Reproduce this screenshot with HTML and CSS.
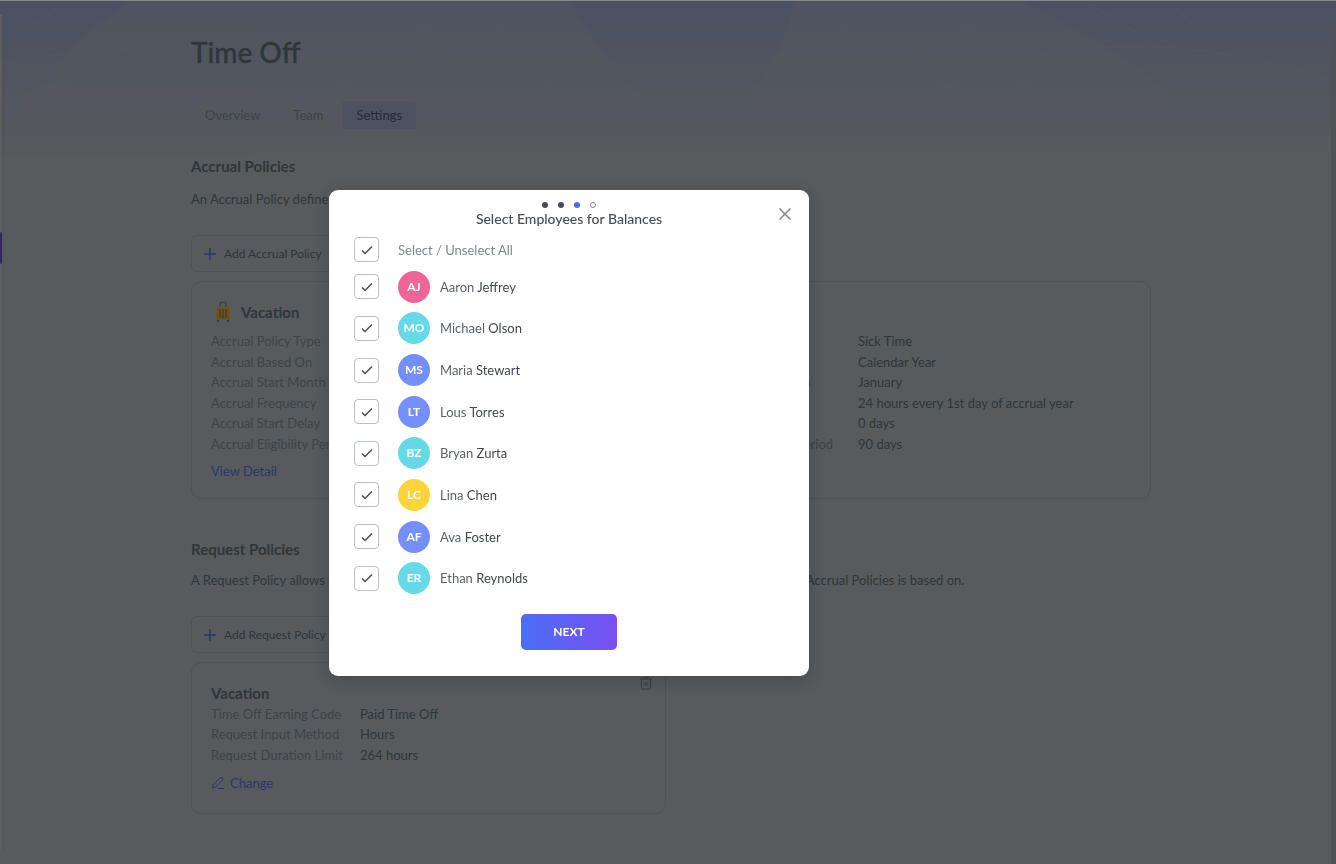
FILE: index.html
```html
<!DOCTYPE html>
<html lang="en">
<head>
  <meta charset="UTF-8" />
  <meta name="viewport" content="width=device-width, initial-scale=1" />
  <title>Time Off</title>
  <link rel="stylesheet" href="styles.css">
</head>
<body>
  <svg class="backdrop" viewBox="0 0 1336 156" preserveAspectRatio="none" aria-hidden="true">
    <g class="shapes">
      <path d="M520 0H570Q600 55 650 105L690 150H340L380 100Q450 40 520 0Z" />
      <path d="M796 0H885Q905 45 950 98L983 134L1040 156H680L743 105Q780 60 796 0Z" />
      <path d="M1020 0Q1110 40 1170 95L1240 156H983Q930 90 885 0Z" />
      <path d="M130 0H520Q450 40 380 100L340 156H0Q40 60 130 0Z" />
    </g>
    <g class="lines">
      <path d="M0 42Q35 28 60 3M0 102Q100 80 182 3M0 64Q80 45 170 52M0 122Q110 98 200 110" />
      <path d="M462 3Q380 50 320 105M485 3Q530 75 590 120M853 5Q840 30 830 55" />
      <path d="M950 3Q990 65 1070 120M890 116C980 60 1120 10 1330 80M1088 3Q1160 40 1212 98M1172 3L1212 44" />
    </g>
  </svg>
  <aside class="sidebar"><span class="marker"></span></aside>

  <main class="page">
    <h1>Time Off</h1>
    <nav class="tabs">
      <a href="#overview">Overview</a>
      <a href="#team">Team</a>
      <a href="#settings" class="active">Settings</a>
    </nav>

    <section>
      <h2>Accrual Policies</h2>
      <p>An Accrual Policy defines how employees earn their time off.</p>
      <button class="add" type="button">
        <svg width="14" height="14" viewBox="0 0 14 14"><path d="M7 1v12M1 7h12" /></svg>
        Add Accrual Policy
      </button>
      <div class="cards">
        <article class="card accrual">
          <h3>
            <svg width="24" height="24" viewBox="0 0 24 24">
              <path d="M9 7V3.500Q9 2.500 10 2.500H14Q15 2.500 15 3.500V7" fill="none" stroke="#3d4346" stroke-width="1.500" />
              <rect x="5" y="7" width="14" height="13" rx="2" fill="#6d5320" />
              <path d="M9 9v9M12 9v9M15 9v9" stroke="#46391f" stroke-width="1.300" />
              <path d="M7 20v2M17 20v2" stroke="#35393b" stroke-width="2" />
            </svg>
            Vacation
          </h3>
          <dl>
            <dt>Accrual Policy Type</dt><dd>Vacation</dd>
            <dt>Accrual Based On</dt><dd>Calendar Year</dd>
            <dt>Accrual Start Month</dt><dd>January</dd>
            <dt>Accrual Frequency</dt><dd>Every pay period</dd>
            <dt>Accrual Start Delay</dt><dd>0 days</dd>
            <dt>Accrual Eligibility Period</dt><dd>90 days</dd>
          </dl>
          <a href="#detail">View Detail</a>
        </article>
        <article class="card accrual">
          <h3>Sick Time</h3>
          <dl>
            <dt>Accrual Policy Type</dt><dd>Sick Time</dd>
            <dt>Accrual Based On</dt><dd>Calendar Year</dd>
            <dt>Accrual Start Month</dt><dd>January</dd>
            <dt>Accrual Frequency</dt><dd>24 hours every 1st day of accrual year</dd>
            <dt>Accrual Start Delay</dt><dd>0 days</dd>
            <dt>Accrual Eligibility Period</dt><dd>90 days</dd>
          </dl>
          <a href="#detail">View Detail</a>
        </article>
      </div>
    </section>

    <section>
      <h2>Request Policies</h2>
      <p>A Request Policy allows employees to request their time off, and it also defines which of the already existing Accrual Policies is based on.</p>
      <button class="add" type="button">
        <svg width="14" height="14" viewBox="0 0 14 14"><path d="M7 1v12M1 7h12" /></svg>
        Add Request Policy
      </button>
      <div class="cards">
        <article class="card request">
          <button class="trash" type="button" aria-label="Delete">
            <svg width="12" height="14" viewBox="0 0 12 14"><path d="M0 3h12M4 3V1h4v2M1.500 3v10h9V3M5 6v4M7 6v4" /></svg>
          </button>
          <h3>Vacation</h3>
          <dl>
            <dt>Time Off Earning Code</dt><dd>Paid Time Off</dd>
            <dt>Request Input Method</dt><dd>Hours</dd>
            <dt>Request Duration Limit</dt><dd>264 hours</dd>
          </dl>
          <a href="#change">
            <svg width="14" height="14" viewBox="0 0 14 14"><path d="M2 9L9.500 1.500Q10.500 1 11.500 2Q12.500 3 11.500 4L4.500 11L1.500 12ZM7 12.500h6" /></svg>
            Change
          </a>
        </article>
      </div>
    </section>
  </main>
  <div class="edge"></div>

  <div class="overlay">
    <form class="modal" role="dialog" aria-labelledby="modalTitle">
      <button class="close" type="button" aria-label="Close">
        <svg width="14" height="14" viewBox="0 0 14 14"><path d="M1.500 1.500L12.500 12.500M12.500 1.500L1.500 12.500" /></svg>
      </button>
      <div class="steps"><i></i><i></i><i class="current"></i><i class="todo"></i></div>
      <h4 id="modalTitle">Select Employees for Balances</h4>
      <label class="all"><input type="checkbox" checked /><span>Select / Unselect All</span></label>
      <div class="people">
        <label><input type="checkbox" checked /><b class="avatar pink">AJ</b><span>Aaron <em>Jeffrey</em></span></label>
        <label><input type="checkbox" checked /><b class="avatar teal">MO</b><span>Michael <em>Olson</em></span></label>
        <label><input type="checkbox" checked /><b class="avatar blue">MS</b><span>Maria <em>Stewart</em></span></label>
        <label><input type="checkbox" checked /><b class="avatar blue">LT</b><span>Lous <em>Torres</em></span></label>
        <label><input type="checkbox" checked /><b class="avatar teal">BZ</b><span>Bryan <em>Zurta</em></span></label>
        <label><input type="checkbox" checked /><b class="avatar yellow">LC</b><span>Lina <em>Chen</em></span></label>
        <label><input type="checkbox" checked /><b class="avatar blue">AF</b><span>Ava <em>Foster</em></span></label>
        <label><input type="checkbox" checked /><b class="avatar teal">ER</b><span>Ethan <em>Reynolds</em></span></label>
      </div>
      <button class="next" type="button">NEXT</button>
    </form>
  </div>
</body>
</html>
```
FILE: styles.css
```css
:root {
  --text: #2f363a;
  --muted: #3d4347;
  --link: #2c3669;
  --line: #4d5255;
}

* {
  box-sizing: border-box;
}

body {
  margin: 0;
  min-height: 100vh;
  font-family: Lato, sans-serif;
  font-size: 13px;
  line-height: 20px;
  color: var(--text);
  background: #575b5e;
  border-top: 1px solid #848b8c;
}

h1, h2, h3, h4, p, dl, dd {
  margin: 0;
}

button {
  font: inherit;
  color: inherit;
  background: none;
  border: none;
  padding: 0;
  cursor: pointer;
}

a {
  color: var(--link);
  text-decoration: none;
}

.backdrop {
  position: absolute;
  top: 1px;
  left: 0;
  width: 100%;
  height: 155px;
  background: linear-gradient(#4b5162, #51555f 50%, #575b5e);
}

.shapes {
  fill: #575b5e;
  opacity: 0.3;
}

.lines {
  fill: none;
  stroke: #5c6067;
  opacity: 0.3;
}

.sidebar {
  position: absolute;
  top: 14px;
  bottom: 14px;
  left: 0;
  width: 2px;
  background: #5b5f61;
  border-radius: 0 4px 4px 0;
  box-shadow: 0 0 4px rgba(30, 34, 40, 0.2);
}

.marker {
  display: block;
  width: 2px;
  height: 32px;
  margin-top: 218px;
  background: #33275f;
  border-radius: 0 2px 2px 0;
}

.edge {
  position: absolute;
  top: 24px;
  right: 0;
  bottom: 0;
  width: 5px;
  background: #4f5356;
}

.page {
  position: relative;
  max-width: 960px;
  margin: 0 auto;
  left: 3px;
  padding-top: 31px;
}

h1 {
  font-size: 28px;
  line-height: 40px;
  font-weight: 500;
  -webkit-text-stroke: 0.3px currentColor;
}

.tabs {
  display: flex;
  gap: 5px;
  margin: 29px 0 25px;
}

.tabs a {
  padding: 4px 14px;
  color: var(--muted);
  border-radius: 4px;
}

.tabs .active {
  color: #242a36;
  background: #4e5260;
}

h2 {
  font-size: 15px;
  line-height: 24px;
}

section p {
  margin: 11px 0 26px;
  white-space: nowrap;
}

section + section {
  margin-top: 38px;
}

section + section p {
  margin: 9px 0 26px;
}

.add {
  display: flex;
  align-items: center;
  gap: 7px;
  width: 165px;
  height: 37px;
  padding-left: 11px;
  border: 1px solid var(--line);
  border-radius: 6px;
  font-size: 12px;
  white-space: nowrap;
}

svg {
  flex: none;
}

.add svg, .card a svg, .trash svg, .close svg {
  fill: none;
  stroke: currentColor;
}

.add svg {
  color: var(--link);
  stroke-width: 1.5;
}

.cards {
  display: grid;
  grid-template-columns: 1fr 1fr;
  gap: 10px;
  margin-top: 9px;
}

.card {
  position: relative;
  padding: 19px;
  border: 1px solid var(--line);
  border-radius: 10px;
}

.card h3 {
  display: flex;
  align-items: center;
  gap: 6px;
  height: 24px;
  font-size: 15px;
}

.card dl {
  display: grid;
}

.card dt {
  color: var(--muted);
}

.accrual {
  padding: 18px 19px 17px;
}

.accrual dl {
  grid-template-columns: 162px 1fr;
  min-height: 123px;
  margin: 7px 0;
}

.request {
  padding-bottom: 20px;
}

.request h3 {
  height: 22px;
}

.request dl {
  grid-template-columns: 149px 1fr;
  min-height: 61px;
  margin-bottom: 8px;
}

.card a {
  display: flex;
  align-items: center;
  gap: 5px;
}

.trash {
  position: absolute;
  top: 13px;
  right: 13px;
  line-height: 0;
  color: #383e43;
}

/* modal */

.overlay {
  position: fixed;
  top: 2px;
  left: 0;
  right: 198px;
  bottom: 0;
  display: flex;
  align-items: center;
  justify-content: center;
}

.modal {
  position: relative;
  display: flex;
  flex-direction: column;
  width: 480px;
  padding: 12px 25px 26px;
  background: #fff;
  border-radius: 9px;
  box-shadow: 0 4px 16px rgba(20, 24, 28, 0.25);
  color: #484c55;
}

.close {
  position: absolute;
  top: 17px;
  right: 17px;
  line-height: 0;
  color: #80878e;
}

.close svg {
  stroke-width: 1.5;
}

.steps {
  display: flex;
  justify-content: center;
  gap: 10px;
  height: 7px;
}

.steps i {
  width: 6px;
  height: 6px;
  border-radius: 50%;
  background: #484c55;
}

.steps .current {
  background: #466df5;
}

.steps .todo {
  background: #fff;
  border: 1px solid #80878e;
}

.modal h4 {
  font-size: 14px;
  line-height: 20px;
  font-weight: 500;
  text-align: center;
}

.modal label {
  display: flex;
  align-items: center;
}

.modal input {
  appearance: none;
  width: 25px;
  height: 25px;
  margin: 0 19px 0 0;
  border: 1px solid #b9bfc6;
  border-radius: 4px;
  background: url("data:image/svg+xml,%3Csvg xmlns='http://www.w3.org/2000/svg' viewBox='0 0 12 10'%3E%3Cpath d='M1 5.500L4 8.500L11 1.500' fill='none' stroke='%23484c55' stroke-width='1.500'/%3E%3C/svg%3E") center / 12px 10px no-repeat;
}

.all {
  height: 25px;
  margin: 8px 0 4px;
  color: #80878e;
}

.people {
  display: grid;
  grid-auto-rows: 1fr;
  min-height: 333px;
  color: #5c626a;
}

.people em {
  font-style: normal;
  color: #42464f;
}

.avatar {
  width: 32px;
  height: 32px;
  margin-right: 10px;
  border-radius: 50%;
  font-size: 12px;
  line-height: 32px;
  text-align: center;
  color: #fff;
}

.pink { background: #f06595; }
.teal { background: #66d9e8; }
.blue { background: #748ffc; }
.yellow { background: #ffd43b; }

.next {
  align-self: center;
  width: 96px;
  height: 36px;
  margin-top: 15px;
  border-radius: 5px;
  font-size: 12px;
  font-weight: 700;
  color: #fff;
  background: linear-gradient(90deg, #4a6ff5, #7950f2);
}
```
